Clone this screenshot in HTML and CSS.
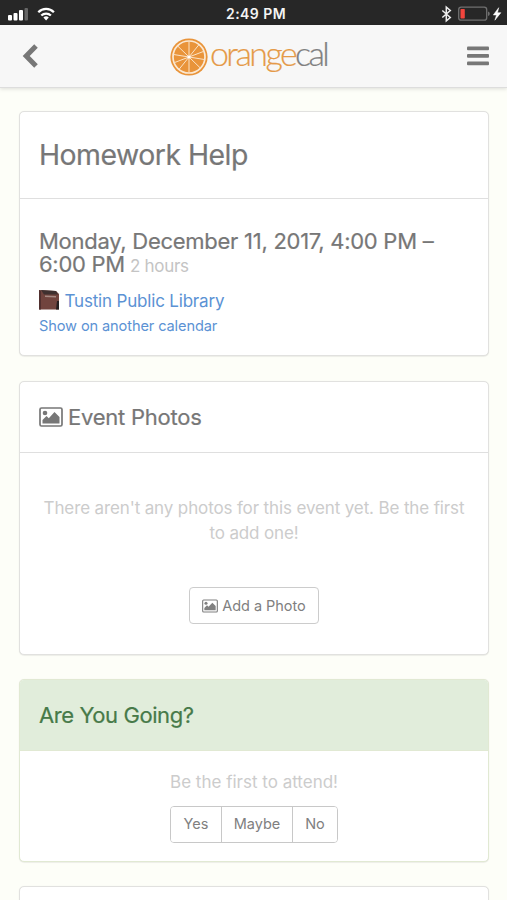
FILE: index.html
```html
<!DOCTYPE html>
<html lang="en">
<head>
<meta charset="utf-8">
<title>Homework Help - orangecal</title>
<link rel="stylesheet" href="styles.css">
</head>
<body>
<svg class="symbols" width="0" height="0">
  <symbol id="photo" viewBox="0 0 24 20">
    <rect x="1" y="1" width="22" height="18" rx="1.5" fill="none" stroke="currentColor" stroke-width="1.7"/>
    <circle cx="6" cy="6" r="2.3" fill="currentColor"/>
    <path d="M3.5 16.5V13l4-4 2.3 2.3L15.5 5l5 5v6.500z" fill="currentColor"/>
  </symbol>
</svg>
<div class="status">
  <div class="status-side">
    <svg width="56" height="24" viewBox="0 0 56 24">
      <g fill="#fff"><rect x="8" y="14" width="4" height="5.500" rx="1"/><rect x="13.500" y="12" width="4" height="7.500" rx="1"/><rect x="19" y="9" width="4" height="10.500" rx="1"/></g>
      <rect x="24.500" y="7" width="3.500" height="12.500" rx="1" fill="#666"/>
      <g fill="none" stroke="#fff" stroke-width="2.300"><path d="M38.300 11.200a11 11 0 0 1 15.600 0"/><path d="M41.300 14.500a6.900 6.900 0 0 1 9.600 0"/></g>
      <path d="M46.100 19.500l-2.700-3a4 4 0 0 1 5.400 0z" fill="#fff"/>
    </svg>
  </div>
  <div class="clock">2:49 PM</div>
  <div class="status-side status-right">
    <svg width="67" height="24" viewBox="440 0 67 24">
      <path d="M442.300 9.500l8 7-4 3.300V6.200l4 3.300-8 7" fill="none" stroke="#eee" stroke-width="1.500"/>
      <rect x="458.700" y="6.200" width="28" height="13" rx="2.500" fill="none" stroke="#707070" stroke-width="1.300"/>
      <rect x="460.500" y="8" width="4.300" height="9.500" rx=".7" fill="#f2453d"/>
      <path d="M488 10.500v4.500q1.800-.6 1.800-2.250T488 10.500z" fill="#707070"/>
      <path d="M498.700 6.700l-5.400 7.300h3.200l-1.600 5.200 6-7.500h-3.400z" fill="#fff" stroke="#fff" stroke-width=".5"/>
    </svg>
  </div>
</div>
<header class="navbar">
  <svg class="back" width="16" height="26" viewBox="0 0 16 26"><path d="M14 3L4.200 13 14 23" fill="none" stroke="#777" stroke-width="5"/></svg>
  <div class="logo">
    <svg width="40" height="40" viewBox="169.300 36.500 40 40">
      <circle cx="189.300" cy="56.500" r="18.600" fill="#e9943a"/>
      <circle cx="189.300" cy="56.500" r="16" fill="none" stroke="#fbe9d3" stroke-width="1.700"/>
      <g stroke="#fbe3c6" stroke-width="1"><path d="M189.300 41v31M174 54l30.600 5M178 45.500l22.600 22M199 44.500l-19.400 24M175 62l28.600-11"/></g>
      <circle cx="189.300" cy="56.500" r="1.500" fill="#fff"/>
    </svg>
    <div class="wordmark">orange<span>cal</span></div>
  </div>
  <svg class="menu" width="22" height="20" viewBox="0 0 22 20"><g fill="#777"><rect y=".5" width="22" height="3.800" rx="1"/><rect y="8" width="22" height="3.800" rx="1"/><rect y="15.500" width="22" height="3.800" rx="1"/></g></svg>
</header>
<main class="content">
  <section class="card event">
    <div class="card-head"><h1>Homework Help</h1></div>
    <div class="card-body">
      <h2 class="when">Monday, December 11, 2017, 4:00 PM –<br>6:00 PM <small>2 hours</small></h2>
      <div class="place">
        <svg width="20" height="20" viewBox="0 0 20 20"><path d="M0 0l17 1 3 3v15.500H0z" fill="#71443e"/><path d="M0 0l2 1v18.500H0z" fill="#51302f"/><path d="M2 0l15 1 2 3.500H5z" fill="#3f302f"/><path d="M6 5.500l11 .5v1.500L6 7z" fill="#a68a83"/><path d="M18 11h2v8.500h-3z" fill="#251f20"/></svg>
        <a>Tustin Public Library</a>
      </div>
      <div class="other"><a>Show on another calendar</a></div>
    </div>
  </section>
  <section class="card photos">
    <div class="card-head"><svg width="24" height="20"><use href="#photo"/></svg><h2>Event Photos</h2></div>
    <div class="card-body">
      <p class="muted">There aren't any photos for this event yet. Be the first<br>to add one!</p>
      <button class="btn"><svg width="16" height="14"><use href="#photo"/></svg><span>Add a Photo</span></button>
    </div>
  </section>
  <section class="card going">
    <div class="card-head"><h2>Are You Going?</h2></div>
    <div class="card-body">
      <p class="muted">Be the first to attend!</p>
      <div class="group"><button class="yes">Yes</button><button class="maybe">Maybe</button><button class="no">No</button></div>
    </div>
  </section>
  <section class="card next"></section>
</main>
</body>
</html>
```
FILE: styles.css
```css
* { box-sizing: border-box; }
body { margin: 0; height: 900px; overflow: hidden; background: #fdfef8; color: #777; font-family: Inter, "Liberation Sans", sans-serif; }
h1, h2, p { margin: 0; white-space: nowrap; }
svg { display: block; flex: none; }
.symbols { position: absolute; }
a { color: #5b92d4; white-space: nowrap; }
button { background: #fff; color: #808080; font: 14.5px/1 Inter, "Liberation Sans", sans-serif; padding: 0; }

.status { height: 25px; background: #272727; display: flex; align-items: center; }
.status-side { flex: 1; }
.status-right { display: flex; justify-content: flex-end; }
.clock { color: #f4f4f4; font-size: 14px; font-weight: 600; letter-spacing: .45px; line-height: 25px; padding-top: 2px; margin-left: 5px; }

.navbar { height: 63px; background: #f7f7f7; border-bottom: 1px solid #ddd; box-shadow: 0 1px 4px rgba(0,0,0,.13); display: flex; align-items: center; padding: 0 18px 0 22px; }
.logo { display: flex; align-items: center; margin-left: 131px; padding-top: 1px; }
.wordmark { width: 122px; padding-left: 1px; font-family: Lato, sans-serif; font-weight: 300; font-size: 34px; line-height: 44px; letter-spacing: -2.6px; color: #e59a48; margin-top: -7px; white-space: nowrap; -webkit-text-stroke: .2px currentColor; }
.wordmark span { color: #808080; }
.menu { margin-left: auto; }

.content { padding: 23px 18px 0 19px; display: flex; flex-direction: column; gap: 24px; }
.card { flex: none; background: #fff; border: 1px solid #e1e1df; border-radius: 5px; box-shadow: 0 1px 1px rgba(0,0,0,.06), 0 0 1px rgba(0,0,0,.08); }
.card-head { display: flex; align-items: center; padding: 0 19px; border-bottom: 1px solid #dfdfdf; }
.event { height: 245px; margin-bottom: 1px; }
.event .card-head { height: 87px; padding-bottom: 2px; }
.event .card-body { padding: 30.500px 19px 0; }
h1, h2 { font-weight: 400; -webkit-text-stroke: .2px currentColor; }
h1 { font-size: 28.4px; letter-spacing: -.5px; }
h2 { font-size: 22px; letter-spacing: -.23px; }
.when { line-height: 23.5px; letter-spacing: -.27px; }
.when small { font-size: 17px; color: #c4c4c4; margin-left: -1px; -webkit-text-stroke: 0; }
.place { display: flex; align-items: center; gap: 5.500px; height: 24px; margin-top: 10px; font-size: 17px; letter-spacing: -.18px; }
.place svg { margin-top: -2px; }
.other { font-size: 14.6px; line-height: 26px; letter-spacing: -.12px; }

.photos { height: 274px; }
.photos .card-head { height: 71px; gap: 5px; }
.photos .card-body { display: flex; flex-direction: column; align-items: center; padding-top: 43px; }
.muted { font-size: 17px; line-height: 24.5px; color: #ccc; text-align: center; }
.photos .muted { letter-spacing: -.13px; }
.btn { width: 130px; height: 37px; margin-top: 42px; border: 1px solid #ccc; border-radius: 4px; display: flex; align-items: center; justify-content: center; gap: 4px; padding-top: 1px; letter-spacing: -.05px; }

.going { height: 183px; border-color: #e1e9d3; }
.going .card-head { height: 71px; background: #e1eddb; border-color: #e1e9d3; border-radius: 4px 4px 0 0; color: #477a49; }
.going h2 { letter-spacing: -.42px; }
.going .card-body { display: flex; flex-direction: column; align-items: center; padding-top: 19px; }
.group { display: flex; height: 37px; margin-top: 11px; border: 1px solid #c8c8c8; border-radius: 4px; overflow: hidden; }
.group button { border: 0; }
.yes { width: 50px; }
.group .maybe { width: 72px; border: solid #c8c8c8; border-width: 0 1px; }
.no { width: 44px; }
.next { height: 60px; }
```
